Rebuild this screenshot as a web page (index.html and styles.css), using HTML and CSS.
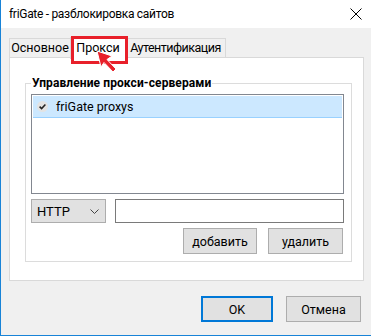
FILE: index.html
```html
<!DOCTYPE html>
<html lang="ru">
<head>
    <meta charset="UTF-8">
    <title>friGate - разблокировка сайтов</title>
    <link rel="stylesheet" href="styles.css">
</head>
<body>
    <div class="window">
        <div class="titlebar">
            <span class="title">friGate - разблокировка сайтов</span>
            <svg class="close" width="12" height="12" viewBox="0 0 12 12">
                <path d="M0.5 0.5 L11.5 11.5 M11.5 0.5 L0.5 11.5" stroke="#000" stroke-width="1" fill="none"/>
            </svg>
        </div>

        <div class="content">
            <div class="tabs">
                <div class="tab tab-main">Основное</div>
                <div class="tab tab-proxy active">Прокси</div>
                <div class="tab tab-auth">Аутентификация</div>
            </div>

            <div class="panel">
                <fieldset class="group">
                    <legend>Управление прокси-серверами</legend>

                    <div class="listbox">
                        <div class="list-item selected">
                            <svg class="check" width="11" height="11" viewBox="0 0 11 11">
                                <circle cx="5.5" cy="5.5" r="5.5" fill="#e3e3e3"/>
                                <path d="M2.6 5.6 L4.6 7.6 L8.4 3.6" stroke="#222" stroke-width="1.5" fill="none"/>
                            </svg>
                            <span>friGate proxys</span>
                        </div>
                    </div>

                    <div class="row">
                        <div class="select">
                            <span>HTTP</span>
                            <svg width="9" height="5" viewBox="0 0 9 5">
                                <path d="M0.5 0.5 L4.5 4.5 L8.5 0.5" stroke="#444" stroke-width="1" fill="none"/>
                            </svg>
                        </div>
                        <div class="input"></div>
                    </div>

                    <div class="row actions">
                        <button class="btn btn-add">добавить</button>
                        <button class="btn btn-del">удалить</button>
                    </div>
                </fieldset>
            </div>

            <div class="footer">
                <button class="btn btn-ok">OK</button>
                <button class="btn btn-cancel">Отмена</button>
            </div>
        </div>

        <!-- highlight drawn over the screenshot -->
        <div class="marker"></div>
        <svg class="pointer" width="22" height="24" viewBox="0 0 22 24">
            <polygon points="1,1 16,6 11,9.5 20,19 17,22 8,12.5 5,17" fill="#e8202a" stroke="#fff" stroke-width="1"/>
        </svg>
    </div>
</body>
</html>
```

FILE: styles.css
```css
* {
    box-sizing: border-box;
}

body {
    margin: 0;
    font-family: Roboto, "Noto Sans", sans-serif;
    font-size: 12px;
    color: #000;
}

.window {
    position: relative;
    width: 371px;
    height: 336px;
    background-color: #f0f0f0;
    border-left: 1px solid #1883d7;
    border-bottom: 1px solid #1883d7;
    overflow: hidden;
}

.titlebar {
    height: 28px;
    background-color: #fff;
    display: flex;
    align-items: center;
    justify-content: space-between;
    padding: 0 5px 0 8px;
}

.title {
    font-size: 12px;
    letter-spacing: -0.3px;
}

.close {
    margin-right: 4px;
}

.content {
    padding: 8px 0 0 8px;
}

.tabs {
    display: flex;
    align-items: flex-end;
    height: 22px;
    position: relative;
    z-index: 1;
}

.tab {
    height: 19px;
    line-height: 17px;
    text-align: center;
    border: 1px solid #d9d9d9;
    border-bottom: none;
    background-color: #f0f0f0;
    margin-bottom: 1px;
    font-size: 12.5px;
    white-space: nowrap;
}

.tab-main {
    width: 62px;
    margin-right: -1px;
}

.tab-proxy {
    width: 56px;
}

.tab-auth {
    width: 101px;
    margin-left: -1px;
    letter-spacing: -0.5px;
}

.tab.active {
    height: 22px;
    line-height: 20px;
    background-color: #fff;
    margin-bottom: -1px;
}

.panel {
    width: 355px;
    height: 224px;
    margin-top: -1px;
    background-color: #fff;
    border: 1px solid #d9d9d9;
    padding: 18px 11px 0 15px;
}

.group {
    margin: 0;
    height: 186px;
    border: 1px solid #dcdcdc;
    padding: 4px 7px 0 5px;
}

.group legend {
    font-weight: bold;
    font-size: 12px;
    letter-spacing: 0.1px;
    padding: 0 1px;
}

.listbox {
    height: 100px;
    border: 1px solid #828790;
    padding: 1px 1px 0 1px;
}

.list-item {
    height: 22px;
    display: flex;
    align-items: center;
    gap: 8px;
    padding-left: 4px;
    font-size: 12.5px;
}

.list-item.selected {
    background-color: #cce8ff;
    border-bottom: 1px solid #99d1ff;
}

.row {
    display: flex;
    margin-top: 5px;
    gap: 9px;
}

.select {
    width: 75px;
    height: 24px;
    background-color: #e1e1e1;
    border: 1px solid #adadad;
    display: flex;
    align-items: center;
    justify-content: space-between;
    padding: 0 6px 0 5px;
    font-size: 13px;
}

.input {
    flex: 1;
    height: 24px;
    background-color: #fff;
    border: 1px solid #7a7a7a;
}

.actions {
    justify-content: flex-end;
    gap: 11px;
    padding-right: 1px;
}

.btn {
    font-family: inherit;
    font-size: 12.5px;
    color: #000;
    background-color: #e1e1e1;
    border: 1px solid #adadad;
    height: 26px;
    padding: 0;
    margin: 0;
}

.btn-add {
    width: 74px;
}

.btn-del {
    width: 75px;
}

.footer {
    display: flex;
    justify-content: flex-end;
    gap: 13px;
    padding: 15px 10px 0 0;
}

.btn-ok {
    width: 72px;
    border: 2px solid #0078d7;
}

.btn-cancel {
    width: 75px;
}

.marker {
    position: absolute;
    left: 70px;
    top: 36px;
    width: 57px;
    height: 28px;
    border: 3px solid #e8202a;
    z-index: 2;
}

.pointer {
    position: absolute;
    left: 95px;
    top: 50px;
    z-index: 3;
}
```
